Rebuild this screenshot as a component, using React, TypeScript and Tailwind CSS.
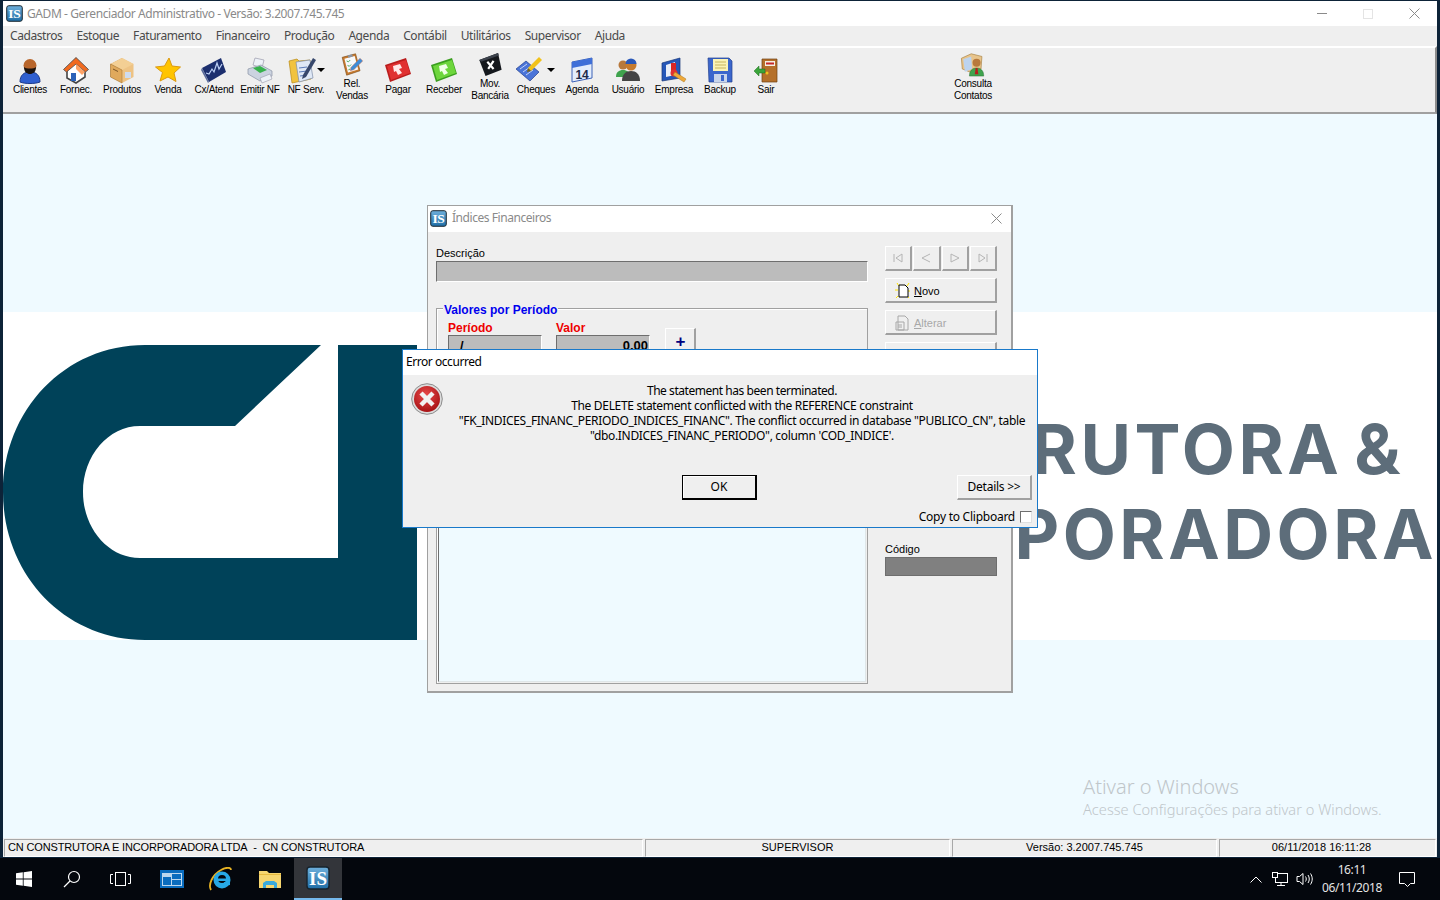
import type { FC, ReactNode } from "react";

const IsLogo: FC<{ size: number }> = ({ size }) => (
  <svg width={size} height={size} viewBox="0 0 24 24">
    <defs>
      <linearGradient id="isg" x1="0" y1="0" x2="0" y2="1">
        <stop offset="0" stopColor="#6fb0dc" />
        <stop offset="1" stopColor="#1f6ea6" />
      </linearGradient>
    </defs>
    <rect x="1" y="1" width="22" height="22" rx="3" fill="url(#isg)" stroke="#17242e" strokeWidth="1.4" />
    <text x="12" y="19" textAnchor="middle" fontFamily="'Liberation Serif', serif" fontWeight="700" fontSize="19" fill="#fff">IS</text>
  </svg>
);

const Arrow = ({ x }: { x: number }) => <path d={`M${x - 4} 12h8l-4 4z`} fill="#000" />;

const icons: Record<string, ReactNode> = {
  clientes: (
    <svg width="28" height="28" viewBox="0 0 28 28">
      <path d="M4 26c0-7 4-10 10-10s10 3 10 10c-5 2-15 2-20 0z" fill="#2f5fd0" stroke="#1c3a8a" />
      <circle cx="14" cy="9.5" r="6.5" fill="#b8662c" />
      <path d="M8 11c2 2 10 2 12 0 0 5-3 7-6 7s-6-2-6-7z" fill="#1b1410" />
    </svg>
  ),
  fornec: (
    <svg width="28" height="28" viewBox="0 0 28 28">
      <path d="M5 13v9l9 5 9-6v-8l-9-10z" fill="#fff" stroke="#444" strokeWidth="1.6" />
      <path d="M1.500 13.500 14 1.500l12.500 12-3 2.500L14 8l-9.500 8z" fill="#f26a1f" stroke="#555" strokeWidth=".9" />
      <path d="M14 8l9 8-3 3-6-6z" fill="#ffa366" />
      <rect x="9" y="17" width="5" height="8" fill="#2c62b8" />
    </svg>
  ),
  produtos: (
    <svg width="28" height="28" viewBox="0 0 28 28">
      <path d="M14 2 2.500 8v13L14 27z" fill="#d8a25a" />
      <path d="M14 2l11.500 6v13L14 27z" fill="#eec384" />
      <path d="M2.500 8 14 14l11.500-6L14 2z" fill="#f3cf94" />
      <path d="M2.500 8 14 14v13L2.500 21z" fill="#e0a95c" stroke="#a87a3d" strokeWidth=".6" />
      <path d="M5 13l5 2.500" stroke="#7a5526" strokeWidth="1" />
      <rect x="17" y="16" width="6" height="6" fill="#cfdcf0" />
    </svg>
  ),
  venda: (
    <svg width="28" height="28" viewBox="0 0 28 28">
      <path d="M15 2l3 8 8.500 1-6.500 6 2 8.500-8-4.500L6 25l2.500-8.500L1.500 11l9-1z" fill="#ffc400" stroke="#dc9a10" strokeLinejoin="round" />
    </svg>
  ),
  cx: (
    <svg width="28" height="28" viewBox="0 0 28 28">
      <path d="M2 12 21 2l5 14-17 10z" fill="#1c2f6e" />
      <path d="M2 12l7 14-1 1L1 14z" fill="#5a6b9a" />
      <path d="M6 17l3 1 3-5 2 3 3-9 2 6 3-5" fill="none" stroke="#bcd0f5" strokeWidth="1.200" />
    </svg>
  ),
  emitir: (
    <svg width="28" height="28" viewBox="0 0 28 28">
      <path d="M9 2l9 2-2 8-9-3z" fill="#eef2f8" stroke="#99a" strokeWidth=".7" />
      <path d="M2 13l13-4 11 6v5l-12 5-12-7z" fill="#cbd3e0" stroke="#8a93a5" strokeWidth=".7" />
      <path d="M7 12l7-2 7 4-7 3z" fill="#37b24d" />
      <path d="M14 22l10-4 2 5-10 4z" fill="#eef2f8" stroke="#99a" strokeWidth=".6" />
    </svg>
  ),
  nf: (
    <svg width="42" height="28" viewBox="0 0 42 28">
      <path d="M4 5l8-2 2 2 11-1 1 19-19 4z" fill="#f1c33f" stroke="#b78a17" strokeWidth=".7" />
      <path d="M11 6l14-2 3 18-14 4z" fill="#dfe8f6" stroke="#7d8ca8" strokeWidth=".7" />
      <path d="M14 12l8-1M14 16l8-1M15 20l7-1" stroke="#5b7bb8" />
      <path d="M18 19 28 2l3 2-10 17-4 2z" fill="#37476b" />
      <Arrow x={36} />
    </svg>
  ),
  rel: (
    <svg width="28" height="28" viewBox="0 0 28 28">
      <path d="M3 6l15-4 5 19-15 5z" fill="#c77a2e" stroke="#7b4a17" strokeWidth=".7" />
      <path d="M5.500 7.500 17 4.500l4 15-11.500 3.500z" fill="#f7f9fc" />
      <path d="M9 4l5-1.500 1 2.500-5 1.500z" fill="#8b95a5" />
      <path d="M8 10l2 1 2-2M9 15l2 1 2-2M10 20l2-1" stroke="#36a146" fill="none" />
      <path d="M13 17 23 7l3 3-10 10-4 1z" fill="#3d8cd8" stroke="#e06a3b" strokeWidth=".5" />
    </svg>
  ),
  pagar: (
    <svg width="28" height="28" viewBox="0 0 28 28">
      <path d="M1 9 22 2l5 16-21 8z" fill="#b91c1c" />
      <path d="M3 10 22 4l4 13-19 7z" fill="#e03131" />
      <path d="M9 10l7-2 2 4-3 1 3 4-4 2-2-4-2 1z" fill="#ffe9e9" />
    </svg>
  ),
  receber: (
    <svg width="28" height="28" viewBox="0 0 28 28">
      <path d="M1 9 22 2l5 16-21 8z" fill="#3a9e1e" />
      <path d="M3 10 22 4l4 13-19 7z" fill="#6dd63c" />
      <path d="M9 10l7-2 2 4-3 1 3 4-4 2-2-4-2 1z" fill="#f0ffe8" />
    </svg>
  ),
  mov: (
    <svg width="28" height="28" viewBox="0 0 28 28">
      <path d="M2 9 23 1l4 19-18 7z" fill="#15181d" />
      <path d="M2 9 23 1l1 3-20 7z" fill="#3c424c" />
      <path d="M11 11l7 8M18 10l-6 9" stroke="#fff" strokeWidth="2.400" />
    </svg>
  ),
  cheques: (
    <svg width="42" height="28" viewBox="0 0 42 28">
      <path d="M1 13 11 5l13 11-9 9z" fill="#4a74d8" stroke="#233f8c" strokeWidth=".7" />
      <path d="M5 13l7-5M8 16l7-5M11 19l7-5" stroke="#c5d4f5" />
      <path d="M13 12 24 1l3 3-11 11z" fill="#f1c21b" />
      <path d="M13 12l-1 4 4-1z" fill="#7a6310" />
      <Arrow x={36} />
    </svg>
  ),
  agenda: (
    <svg width="28" height="28" viewBox="0 0 28 28">
      <path d="M4 6l20-4v20l-20 4z" fill="#e4edfb" stroke="#3d62b8" />
      <path d="M4 6l20-4v6L4 12z" fill="#3f6fd8" />
      <text x="14" y="23" textAnchor="middle" fontFamily="'Liberation Sans', sans-serif" fontWeight="700" fontSize="12" fill="#1d2b4a">14</text>
    </svg>
  ),
  usuario: (
    <svg width="28" height="28" viewBox="0 0 28 28">
      <circle cx="9" cy="9" r="4.500" fill="#b8793c" />
      <path d="M2 21c0-5 3-7 7-7s7 2 7 7z" fill="#3fa34d" />
      <circle cx="17" cy="9" r="5.500" fill="#c67b2e" />
      <path d="M11.500 8a5.500 5.500 0 0 1 11 0z" fill="#2a58b8" />
      <path d="M8 25c0-7 4-10 9-10s9 3 9 10z" fill="#444" />
    </svg>
  ),
  empresa: (
    <svg width="28" height="28" viewBox="0 0 28 28">
      <path d="M2 7l18-5v20L2 25z" fill="#2557b8" stroke="#17367a" strokeWidth=".7" />
      <path d="M6 9l9-3v13l-9 2z" fill="#e9eef8" />
      <rect x="11" y="7" width="5" height="9" fill="#d92525" />
      <circle cx="14" cy="17" r="3.500" fill="#e03131" />
      <path d="M15 16l11 7-2 3-11-7z" fill="#efa93a" stroke="#a8741f" strokeWidth=".5" />
    </svg>
  ),
  backup: (
    <svg width="28" height="28" viewBox="0 0 28 28">
      <path d="M2 2h21l3 3v21H3z" fill="#3b66cc" stroke="#213f8e" strokeWidth=".7" />
      <rect x="7" y="3" width="15" height="12" fill="#fbf3b6" />
      <path d="M9 6h11M9 9h11M9 12h11" stroke="#c8b45c" />
      <rect x="8" y="18" width="13" height="8" fill="#c8d4ea" />
      <rect x="15" y="19" width="3" height="6" fill="#3b66cc" />
    </svg>
  ),
  sair: (
    <svg width="28" height="28" viewBox="0 0 28 28">
      <path d="M10 3h15v23H10z" fill="#b5702a" stroke="#6e3f12" strokeWidth=".7" />
      <rect x="13" y="5" width="10" height="5" fill="#f5f0e4" />
      <path d="M14 7.500h8" stroke="#c62828" strokeWidth="2" />
      <circle cx="15" cy="17" r="1.500" fill="#f1c21b" />
      <path d="M2 15l5-5v3h6v4H7v3z" fill="#3aa53a" stroke="#1c6b1c" strokeWidth=".5" />
    </svg>
  ),
  consulta: (
    <svg width="28" height="28" viewBox="0 0 28 28">
      <path d="M1 7l11-5 12 3-1 14-11 4-10-4z" fill="#e8c48b" stroke="#a27b3c" strokeWidth=".7" />
      <path d="M3 8l9-3 1 14-8 3z" fill="#bcd3ee" />
      <circle cx="18" cy="12" r="4.500" fill="#b8793c" />
      <path d="M10 27c0-6 3-9 8-9s8 3 8 9z" fill="#3fa34d" stroke="#1f6b2a" strokeWidth=".5" />
      <path d="M17 18h2l1 7h-4z" fill="#b71c1c" />
    </svg>
  ),
};

type ToolItem = { icon: string; label: string[] };

const tools: ToolItem[] = [
  { icon: "clientes", label: ["Clientes"] },
  { icon: "fornec", label: ["Fornec."] },
  { icon: "produtos", label: ["Produtos"] },
  { icon: "venda", label: ["Venda"] },
  { icon: "cx", label: ["Cx/Atend"] },
  { icon: "emitir", label: ["Emitir NF"] },
  { icon: "nf", label: ["NF Serv."] },
  { icon: "rel", label: ["Rel.", "Vendas"] },
  { icon: "pagar", label: ["Pagar"] },
  { icon: "receber", label: ["Receber"] },
  { icon: "mov", label: ["Mov.", "Bancária"] },
  { icon: "cheques", label: ["Cheques"] },
  { icon: "agenda", label: ["Agenda"] },
  { icon: "usuario", label: ["Usuário"] },
  { icon: "empresa", label: ["Empresa"] },
  { icon: "backup", label: ["Backup"] },
  { icon: "sair", label: ["Sair"] },
];

const menus = ["Cadastros", "Estoque", "Faturamento", "Financeiro", "Produção", "Agenda", "Contábil", "Utilitários", "Supervisor", "Ajuda"];

const ToolButton: FC<ToolItem> = ({ icon, label }) => {
  const two = label.length > 1;
  return (
    <div className="flex w-[46px] shrink-0 flex-col items-center text-[10px] leading-[12px] tracking-[-0.25px] text-black">
      <div className={two ? "mt-[4px] flex h-[26px] items-start justify-center [&>svg]:h-[25px]" : "mt-[8px] flex h-[28px] items-start justify-center"}>
        {icons[icon]}
      </div>
      {label.map((l) => (
        <div key={l} className="whitespace-nowrap">{l}</div>
      ))}
    </div>
  );
};

const Bevel: FC<{ className: string; children?: ReactNode }> = ({ className, children }) => (
  <div className={"flex items-center border-t border-l border-r-2 border-b-2 border-t-white border-l-white border-r-[#a0a0a0] border-b-[#a0a0a0] bg-[#efefef] " + className}>
    {children}
  </div>
);

const Sunken = "border border-t-[#6e6e6e] border-l-[#6e6e6e] border-r-white border-b-white";

const NavGlyph: FC<{ d: string }> = ({ d }) => (
  <Bevel className="h-[25px] flex-1 justify-center">
    <svg width="12" height="12" viewBox="0 0 12 12" fill="none" stroke="#b4b4b4">
      <path d={d} />
    </svg>
  </Bevel>
);

const MdiWindow = () => (
  <div className="absolute left-[424px] top-[91px] flex h-[488px] w-[586px] flex-col border border-[#a0a0a0] border-r-2 border-b-2 bg-[#efefef] font-['Liberation_Sans',sans-serif]">
    <div className="flex h-[26px] shrink-0 items-center bg-white pb-[2px] pl-[2px] font-['Noto_Sans',sans-serif] text-[12px] tracking-[-0.45px] text-[#8a8a8a]">
      <IsLogo size={17} />
      <span className="ml-[5px]">Índices Financeiros</span>
      <svg className="ml-auto mr-[9px]" width="11" height="11" viewBox="0 0 11 11" stroke="#8a8a8a">
        <path d="M0.500 0.500l10 10M10.500 0.500l-10 10" />
      </svg>
    </div>
    <div className="flex flex-1 pl-[8px]">
      <div className="flex w-[432px] shrink-0 flex-col pb-[7px] pt-[14px]">
        <div className="text-[11px] leading-[14px] text-black">Descrição</div>
        <div className={"mt-[1px] h-[21px] bg-[#bcbcbc] " + Sunken} />
        <div className="relative mt-[26px] flex flex-1 flex-col border border-[#a0a0a0] pb-px pl-px pr-px pt-[12px] shadow-[inset_1px_1px_0_#fff]">
          <div className="absolute left-[6px] top-[-5px] bg-[#efefef] px-px text-[12px] font-bold leading-[13px] text-[#0000ee]">Valores por Período</div>
          <div className="flex items-start pl-[10px]">
            <div className="w-[94px]">
              <div className="text-[12px] font-bold leading-[14px] text-[#ee0000]">Período</div>
              <div className={"h-[20px] bg-[#bcbcbc] pl-[11px] text-[13px] font-bold leading-[20px] " + Sunken}>/</div>
            </div>
            <div className="ml-[14px] w-[94px]">
              <div className="text-[12px] font-bold leading-[14px] text-[#ee0000]">Valor</div>
              <div className={"h-[20px] bg-[#bcbcbc] pr-px text-right text-[13px] font-bold leading-[20px] " + Sunken}>0,00</div>
            </div>
            <Bevel className="ml-[15px] mt-[7px] h-[29px] w-[31px] justify-center pl-px text-[17px] font-bold text-[#000080]">+</Bevel>
          </div>
          <div className="mt-[10px] flex-1 border border-t-[#6e6e6e] border-l-[#6e6e6e] border-r-[#dfe6e8] border-b-[#dfe6e8] bg-[#effaff]" />
        </div>
      </div>
      <div className="ml-[17px] flex w-[112px] flex-col pt-[14px]">
        <div className="flex gap-px">
          <NavGlyph d="M2 2v8M10 2 4 6l6 4z" />
          <NavGlyph d="M10 2 2 6l8 4" />
          <NavGlyph d="M2 2l8 4-8 4z" />
          <NavGlyph d="M10 2v8M2 2l6 4-6 4z" />
        </div>
        <Bevel className="mt-[7px] h-[25px] pt-[2px] text-[11px] text-black">
          <svg className="ml-[8px]" width="18" height="18" viewBox="0 0 18 18">
            <path d="M3 1l2 3M15 1l-2 3M1 8h3M2 16l2-2M15 16l-2-2M16 9h-2" stroke="#ffe600" />
            <path d="M5 3h6l3 3v9H5z" fill="#fff" stroke="#000" />
          </svg>
          <span className="ml-[2px]"><span className="underline">N</span>ovo</span>
        </Bevel>
        <Bevel className="mt-[7px] h-[25px] pt-[2px] text-[11px] text-[#a8a8a8]">
          <svg className="ml-[8px]" width="18" height="18" viewBox="0 0 18 18" fill="none" stroke="#a8a8a8">
            <path d="M4 2h7l3 3v11H4zM2 8h8v8H2zM4 11h4M4 13h4" />
          </svg>
          <span className="ml-[2px]"><span className="underline">A</span>lterar</span>
        </Bevel>
        <Bevel className="mt-[7px] h-[25px]" />
        <div className="mt-[175px] text-[11px] leading-[14px] text-black">Código</div>
        <div className="mt-[1px] h-[19px] border border-[#6e6e6e] bg-[#808080]" />
      </div>
    </div>
  </div>
);

const ErrorIcon = () => (
  <svg width="32" height="32" viewBox="0 0 32 32">
    <defs>
      <radialGradient id="err" cx="0.45" cy="0.35" r="0.7">
        <stop offset="0" stopColor="#ea4a4a" />
        <stop offset="1" stopColor="#a30f12" />
      </radialGradient>
    </defs>
    <circle cx="16" cy="16" r="15.300" fill="#dcdcdc" stroke="#8c8c8c" />
    <circle cx="16" cy="16" r="13" fill="url(#err)" />
    <path d="M10 10l12 12M22 10l-12 12" stroke="#f2f2f2" strokeWidth="4.500" />
  </svg>
);

const ErrorDialog = () => (
  <div className="absolute left-[399px] top-[235px] flex h-[179px] w-[636px] flex-col border border-[#1979ca] bg-[#efefef] font-['Noto_Sans',sans-serif] text-[12px] text-black">
    <div className="flex h-[25px] shrink-0 items-center bg-white pb-[2px] pl-[3px] tracking-[-0.45px]">Error occurred</div>
    <div className="flex h-[84px] pl-[8px] pt-[8px]">
      <ErrorIcon />
      <div className="ml-[8px] w-[582px] text-center leading-[15px] tracking-[-0.32px]">
        <div className="whitespace-nowrap tracking-[-0.45px]">The statement has been terminated.</div>
        <div className="whitespace-nowrap">The DELETE statement conflicted with the REFERENCE constraint</div>
        <div className="whitespace-nowrap">"FK_INDICES_FINANC_PERIODO_INDICES_FINANC". The conflict occurred in database "PUBLICO_CN", table</div>
        <div className="whitespace-nowrap">"dbo.INDICES_FINANC_PERIODO", column 'COD_INDICE'.</div>
      </div>
    </div>
    <div className="mt-[16px] flex h-[25px] pr-[5px]">
      <div className="ml-[279px] flex h-[25px] w-[75px] items-center justify-center border border-black border-r-2 border-b-2 bg-[#efefef] shadow-[inset_1px_1px_0_#fff]">OK</div>
      <Bevel className="ml-auto h-[25px] w-[75px] justify-center tracking-[-0.25px]">{"Details >>"}</Bevel>
    </div>
    <div className="mt-[8px] flex items-center justify-end pr-[5px]">
      <span className="tracking-[-0.25px]">Copy to Clipboard</span>
      <div className="ml-[5px] h-[12px] w-[12px] border border-t-[#6e6e6e] border-l-[#6e6e6e] border-r-[#e0e0e0] border-b-[#e0e0e0] bg-white" />
    </div>
  </div>
);

const Wallpaper = () => (
  <div className="mt-[198px] flex h-[328px] justify-between overflow-hidden bg-white">
    <svg className="shrink-0" width="414" height="328" viewBox="3 312 414 328">
      <path d="M145 345H321L235 426H140C108 426 83 456 83 492C83 528 108 558 140 558H338V345H417V640H145C65 640 3 575 3 492C3 410 65 345 145 345Z" fill="#004259" />
    </svg>
    <div className="pt-[95px] text-right font-['Inter',sans-serif] text-[69px] font-bold leading-[85px] tracking-[3.500px] text-[#5d6d7a] whitespace-nowrap [word-spacing:-8px]">
      <div className="pr-[33px]">RUTORA &amp;</div>
      <div>PORADORA</div>
    </div>
  </div>
);

const StatusPanel: FC<{ className: string; children: ReactNode }> = ({ className, children }) => (
  <div className={"flex h-[18px] items-center border border-t-[#a8a8a8] border-l-[#a8a8a8] border-r-white border-b-white " + className}>
    {children}
  </div>
);

const Taskbar = () => (
  <div className="flex h-[42px] shrink-0 items-center bg-[#04070d] text-white">
    <div className="flex h-full w-[48px] items-center justify-center">
      <svg width="16" height="16" viewBox="0 0 16 16" fill="#fff">
        <path d="M0 2.300 6.800 1.300v6.300H0zM7.600 1.200 16 0v7.600H7.600zM0 8.400h6.800v6.300L0 13.700zM7.600 8.400H16V16l-8.400-1.200z" />
      </svg>
    </div>
    <div className="flex h-full w-[48px] items-center justify-center">
      <svg width="18" height="18" viewBox="0 0 18 18" fill="none" stroke="#fff" strokeWidth="1.200">
        <circle cx="11" cy="7" r="5.500" />
        <path d="M7 11l-6 6" />
      </svg>
    </div>
    <div className="flex h-full w-[48px] items-center justify-center">
      <svg width="21" height="14" viewBox="0 0 21 14" fill="none" stroke="#fff">
        <rect x="5.500" y="0.500" width="10" height="13" />
        <path d="M3 2.500H.5v9H3M18 2.500h2.500v9H18" />
      </svg>
    </div>
    <div className="ml-[3px] flex h-full w-[49px] items-center justify-center">
      <svg width="24" height="18" viewBox="0 0 24 18">
        <rect width="24" height="18" fill="#0a6cbe" />
        <rect x="2" y="3" width="20" height="13" fill="#bcd7ee" />
        <rect x="3" y="7" width="8" height="8" fill="#0a6cbe" />
        <rect x="12" y="4" width="9" height="5" fill="#0a6cbe" />
        <rect x="12" y="10" width="9" height="5" fill="#0a6cbe" />
      </svg>
    </div>
    <div className="flex h-full w-[49px] items-center justify-center">
      <svg width="24" height="24" viewBox="0 0 24 24">
        <path d="M2 23C-1 18 3 8 12 3c5-3 10-3 10 0" fill="none" stroke="#e8b324" strokeWidth="1.800" />
        <circle cx="13" cy="13" r="8.500" fill="#27a9e6" />
        <circle cx="13" cy="12" r="4" fill="#04070d" />
        <rect x="8" y="11.500" width="10" height="2.500" fill="#27a9e6" />
        <path d="M15 15l6 1v2l-6 1z" fill="#27a9e6" />
      </svg>
    </div>
    <div className="flex h-full w-[49px] items-center justify-center">
      <svg width="22" height="18" viewBox="0 0 22 18">
        <path d="M0 1h8l2 2h12v15H0z" fill="#f6d56f" />
        <path d="M0 4h22v1H0z" fill="#e6b93f" />
        <path d="M4 18v-5l3-2h8l3 2v5h-3v-3H7v3z" fill="#39a9dc" />
      </svg>
    </div>
    <div className="flex h-full w-[48px] items-center justify-center border-b-2 border-b-[#76b9ed] bg-[#33353a]">
      <IsLogo size={24} />
    </div>
    <div className="ml-auto flex h-full items-center font-['Noto_Sans',sans-serif] text-[12px] text-[#e4e4e4]">
      <svg width="12" height="7" viewBox="0 0 12 7" fill="none" stroke="#fff">
        <path d="M.5 6.500 6 1l5.500 5.500" />
      </svg>
      <svg className="ml-[10px]" width="16" height="14" viewBox="0 0 16 14" fill="none" stroke="#fff">
        <rect x="3.500" y="1.500" width="12" height="9" />
        <rect x="0.500" y="0.500" width="5" height="5" fill="#04070d" />
        <path d="M9 10.500v3M5 13.500h8" />
      </svg>
      <svg className="ml-[8px]" width="17" height="14" viewBox="0 0 17 14" fill="none" stroke="#fff">
        <path d="M1 4.500h2.500L7 1.500v11L3.500 9.500H1zM9.500 4.500c1 1.500 1 3.500 0 5M12 3c1.700 2.500 1.700 5.500 0 8M14.500 1.500c2.300 3.500 2.300 7.500 0 11" />
      </svg>
      <div className="ml-px flex w-[76px] flex-col items-center leading-[18px] tracking-[-0.4px]">
        <div>16:11</div>
        <div>06/11/2018</div>
      </div>
      <svg className="ml-[9px] mr-[25px]" width="16" height="15" viewBox="0 0 16 15" fill="none" stroke="#fff">
        <path d="M.5.500h15v11h-4l-3 3-3-3h-5z" />
      </svg>
    </div>
  </div>
);

export default function App() {
  return (
    <div className="flex h-[900px] w-[1440px] flex-col overflow-hidden bg-[#0d2338] font-['Liberation_Sans',sans-serif]">
      <div className="flex h-[858px] shrink-0 flex-col pb-px pl-[3px] pr-[3px] pt-px">
        <div className="flex h-[25px] shrink-0 items-center bg-white pl-[3px] font-['Noto_Sans',sans-serif] text-[12px] text-[#8a8a8a]">
          <IsLogo size={17} />
          <span className="ml-[4px] tracking-[-0.41px]">GADM - Gerenciador Administrativo - Versão: 3.2007.745.745</span>
          <div className="ml-auto flex">
            <div className="flex h-[25px] w-[46px] items-center justify-center">
              <div className="h-px w-[10px] bg-[#8a8a8a]" />
            </div>
            <div className="flex h-[25px] w-[46px] items-center justify-center">
              <div className="h-[10px] w-[10px] border border-[#e4e4e4]" />
            </div>
            <div className="flex h-[25px] w-[46px] items-center justify-center">
              <svg width="11" height="11" viewBox="0 0 11 11" stroke="#8a8a8a">
                <path d="M.5.500l10 10M10.500.500l-10 10" />
              </svg>
            </div>
          </div>
        </div>
        <div className="flex h-[20px] shrink-0 items-center gap-[14px] bg-[#efefef] pl-[7px] font-['Noto_Sans',sans-serif] text-[12px] tracking-[-0.42px] text-[#4a4a4a]">
          {menus.map((m) => (
            <span key={m}>{m}</span>
          ))}
        </div>
        <div className="flex h-[68px] shrink-0 border-t-2 border-b-2 border-r-2 border-t-white border-b-[#a0a0a0] border-r-[#8c8c8c] bg-[#efefef] pl-[4px]">
          {tools.map((t) => (
            <ToolButton key={t.icon} {...t} />
          ))}
          <div className="ml-[161px]">
            <ToolButton icon="consulta" label={["Consulta", "Contatos"]} />
          </div>
        </div>
        <div className="relative flex-1 bg-[#effaff]">
          <Wallpaper />
          <MdiWindow />
          <ErrorDialog />
          <div className="absolute left-[1080px] top-[660px] font-['Noto_Sans',sans-serif] text-[#bfc6ca]">
            <div className="text-[20px] font-light leading-[26px]">Ativar o Windows</div>
            <div className="text-[14.600px] font-light leading-[19px]">Acesse Configurações para ativar o Windows.</div>
          </div>
        </div>
        <div className="flex h-[19px] shrink-0 items-center gap-[2px] bg-[#efefef] pl-px pr-px text-[11px] text-black">
          <StatusPanel className="w-[639px] pl-[3px] tracking-[-0.15px]">CN CONSTRUTORA E INCORPORADORA LTDA&nbsp; -&nbsp; CN CONSTRUTORA</StatusPanel>
          <StatusPanel className="w-[305px] justify-center">SUPERVISOR</StatusPanel>
          <StatusPanel className="w-[265px] justify-center">Versão: 3.2007.745.745</StatusPanel>
          <StatusPanel className="flex-1 justify-center pr-[12px]">06/11/2018 16:11:28</StatusPanel>
        </div>
      </div>
      <Taskbar />
    </div>
  );
}
